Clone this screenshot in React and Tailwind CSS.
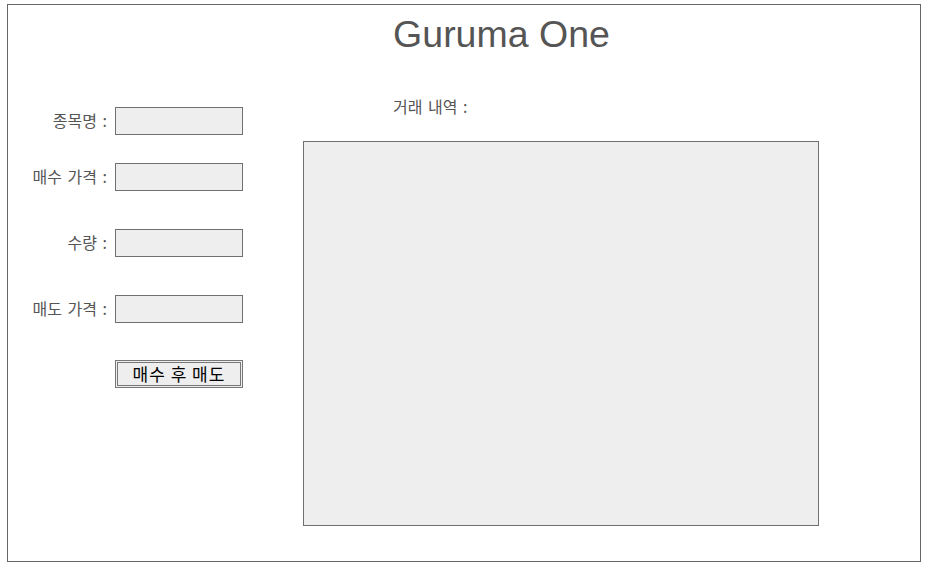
import React from 'react';

const fields = [
    { label: '종목명 :', mt: 'mt-[12px]' },
    { label: '매수 가격 :', mt: 'mt-[28px]' },
    { label: '수량 :', mt: 'mt-[38px]' },
    { label: '매도 가격 :', mt: 'mt-[38px]' },
];

const labelFont = "font-['Noto_Sans_CJK_KR',sans-serif]";

const App = () => {
    return (
        <div className="min-h-screen bg-white pt-[4px] pl-[7px]">
            <div className="w-[914px] h-[558px] border border-[#666]">
                {/* 제목 */}
                <h1 className="mt-[9px] pl-[75px] text-center text-[37.5px] leading-[41px] text-[#555] font-['Liberation_Sans',Arial,sans-serif]">
                    Guruma One
                </h1>

                <div className="flex mt-[40px]">
                    {/* 입력 폼 */}
                    <div className="flex flex-col">
                        {fields.map((f) => (
                            <div key={f.label} className={`flex items-center h-[28px] ${f.mt}`}>
                                <span className={`w-[99px] pb-[2px] text-right text-[16px] [word-spacing:2px] text-[#555] ${labelFont}`}>
                                    {f.label}
                                </span>
                                <input
                                    type="text"
                                    className="ml-[8px] w-[128px] h-[28px] border border-[#707070] bg-[#eee] outline-none"
                                />
                            </div>
                        ))}
                        <div className="flex mt-[37px]">
                            <button
                                className={`ml-[107px] w-[128px] h-[28px] border-[3px] border-double border-[#777] bg-[#eee] text-[17px] leading-[20px] tracking-[1px] text-black ${labelFont}`}
                            >
                                매수 후 매도
                            </button>
                        </div>
                    </div>

                    {/* 거래 내역 */}
                    <div className="ml-[60px] flex flex-col">
                        <span className={`pl-[90px] text-[16px] leading-[22px] [word-spacing:2px] text-[#555] ${labelFont}`}>
                            거래 내역 :
                        </span>
                        <textarea
                            readOnly
                            className="mt-[24px] w-[516px] h-[385px] border border-[#707070] bg-[#eee] resize-none outline-none"
                        />
                    </div>
                </div>
            </div>
        </div>
    );
};

export default App;
